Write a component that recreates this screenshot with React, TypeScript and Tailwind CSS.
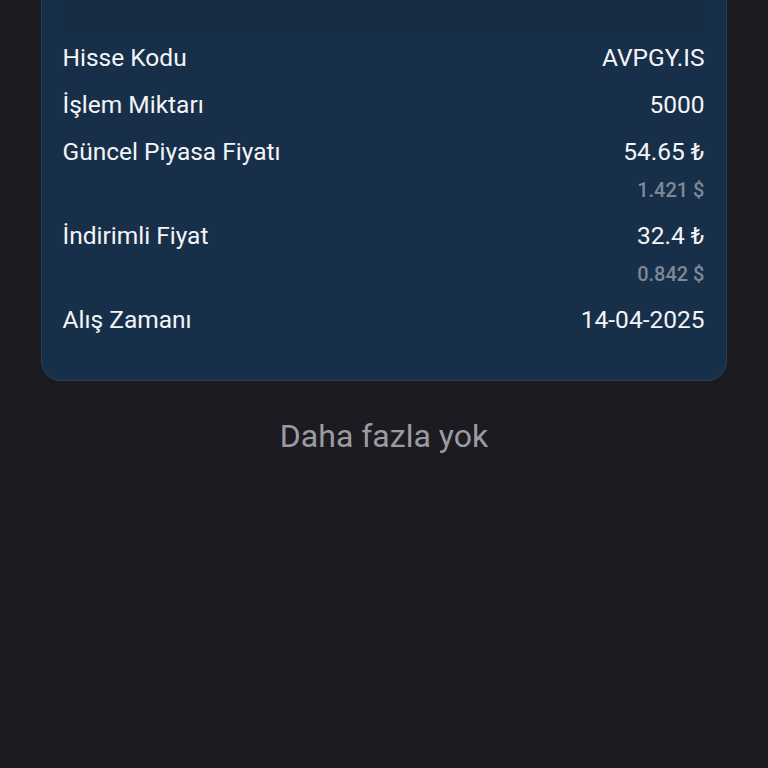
import React from "react";

const Row = ({ label, value, sub }: { label: string; value: string; sub?: string }) => (
  <div className="flex flex-col">
    <div className="flex justify-between items-center h-[47px] text-[24.5px] text-[#f3f5f8]">
      <span>{label}</span>
      <span>{value}</span>
    </div>
    {sub && (
      <div className="flex justify-end items-center h-[27px] mb-[10px] text-[20px] font-medium text-[#7d8898]">
        <span>{sub}</span>
      </div>
    )}
  </div>
);

export default function App() {
  return (
    <div
      className="w-[768px] h-[768px] bg-[#1b1b21] overflow-hidden flex flex-col items-center"
      style={{ fontFamily: "Roboto, 'Noto Sans', sans-serif" }}
    >
      <div className="w-[686px] ml-[-1px] bg-[#182f49] border border-t-0 border-[#2c3d52] rounded-b-[20px] px-[21px] pb-[36px] flex flex-col">
        <div className="h-[31px] bg-[#172b42] rounded-b-md mb-[4px]" />
        <Row label="Hisse Kodu" value="AVPGY.IS" />
        <Row label="İşlem Miktarı" value="5000" />
        <Row label="Güncel Piyasa Fiyatı" value="54.65 ₺" sub="1.421 $" />
        <Row label="İndirimli Fiyat" value="32.4 ₺" sub="0.842 $" />
        <Row label="Alış Zamanı" value="14-04-2025" />
      </div>
      <div className="mt-[31px] text-[32px] text-[#9b9ba1]">Daha fazla yok</div>
    </div>
  );
}
